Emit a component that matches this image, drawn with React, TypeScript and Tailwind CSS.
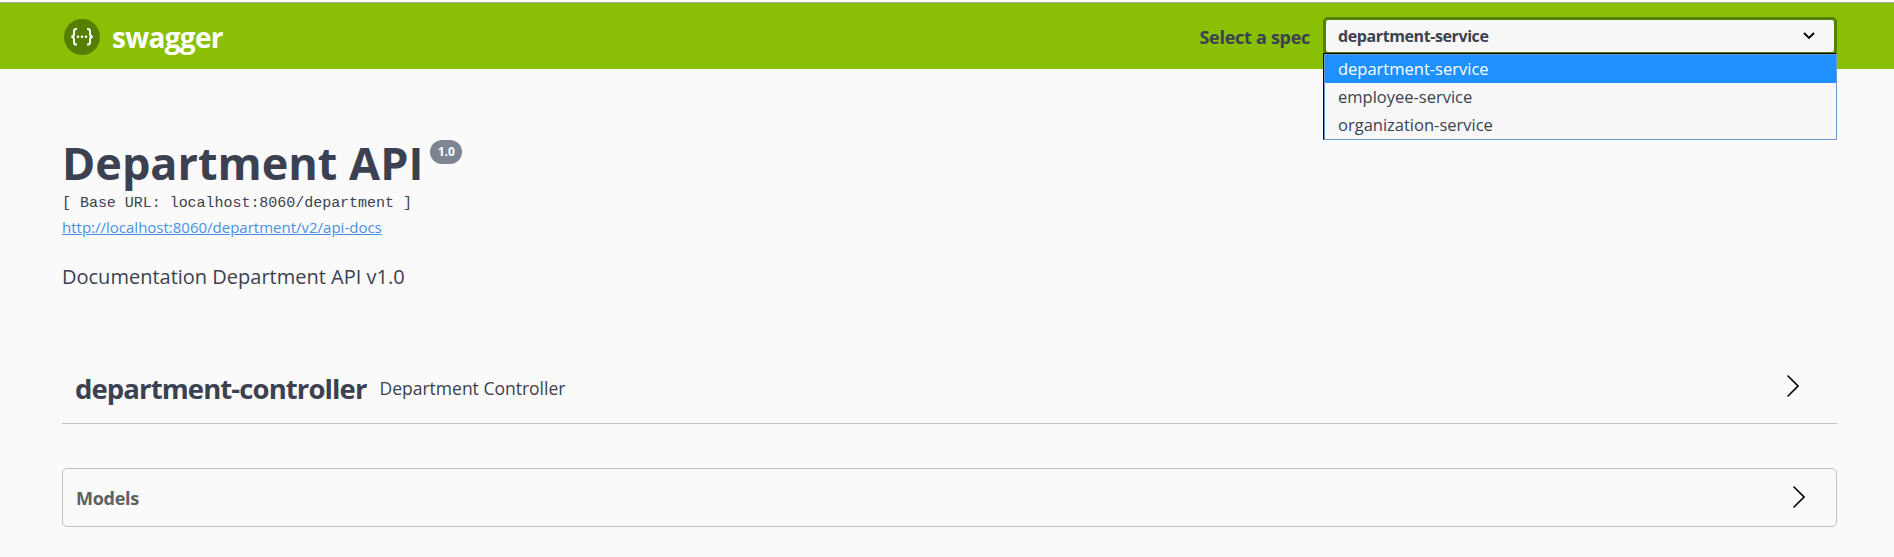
import React from "react";

const services = ["department-service", "employee-service", "organization-service"];

function Arrow({ className }: { className: string }) {
  return (
    <svg width="12" height="22" viewBox="0 0 12 22" fill="none" className={className}>
      <path d="M1 1 L11 11 L1 21" stroke="#000" strokeWidth="1.6" strokeLinecap="round" />
    </svg>
  );
}

function Logo() {
  return (
    <svg width="36" height="36" viewBox="0 0 36 36" fill="none">
      <circle cx="18" cy="18" r="18" fill="#547f00" />
      <g stroke="#fff" strokeWidth="2">
        <path d="M13 10 h-.8 q-2.2 0-2.2 2.4 v2.6 q0 2.8-2.8 2.8 q2.8 0 2.8 2.8 v2.6 q0 2.4 2.2 2.4 h.8" />
        <path d="M23 10 h.8 q2.2 0 2.2 2.4 v2.6 q0 2.8 2.8 2.8 q-2.8 0-2.8 2.8 v2.6 q0 2.4-2.2 2.4 h-.8" />
      </g>
      <g fill="#fff">
        <circle cx="14" cy="17.8" r="1.3" />
        <circle cx="18" cy="17.8" r="1.3" />
        <circle cx="22" cy="17.8" r="1.3" />
      </g>
    </svg>
  );
}

export default function App() {
  return (
    <div className="h-[557px] overflow-hidden bg-[#fafafa] font-['Open_Sans',sans-serif] text-[#3b4151]">
      <div className="h-[3px] border-b border-[#a9a9a9] bg-white" />
      <header className="flex h-[66px] items-start bg-[#89bf04] pl-16 pr-[57px]">
        <div className="flex flex-1 items-center pt-4">
          <Logo />
          <span className="ml-3 text-[28px] leading-9 font-bold tracking-[-0.7px] text-white">swagger</span>
        </div>
        <span className="mr-[13px] pt-[17px] text-[18px] leading-[34px] font-bold tracking-[-0.28px]">Select a spec</span>
        <div className="relative mt-[14px] w-[514px]">
          <div className="flex h-[38px] items-center justify-between rounded-[5px] border-[3px] border-[#547f00] bg-[#f7f7f7] pr-[19px] pl-[12px]">
            <span className="text-[16px] leading-8 font-bold tracking-[-0.4px]">{services[0]}</span>
            <svg width="12" height="8" viewBox="0 0 12 8" fill="none">
              <path d="M1 1 L6 6 L11 1" stroke="#000" strokeWidth="1.9" />
            </svg>
          </div>
          <ul className="absolute top-9 left-0 h-[87px] w-full border border-[#7397cf] border-t-black border-l-black bg-[#f7f7f7]">
            <li className="h-px bg-[#7397cf]" />
            {services.map((s, i) => (
              <li
                key={s}
                className={
                  i === 0
                    ? "h-7 border-l border-[#7397cf] bg-[#1e90ff] pl-[13px] text-[16.5px] leading-7 text-white"
                    : "h-7 border-l border-[#7397cf] pl-[13px] text-[16.5px] leading-7"
                }
              >
                {s}
              </li>
            ))}
          </ul>
        </div>
      </header>
      <main className="pr-[57px] pl-[62px]">
        <div className="flex items-start pt-[63px] pb-px">
          <h1 className="text-[45px] leading-[61px] font-bold">Department API</h1>
          <span className="mt-2 ml-[7px] h-6 w-8 rounded-full bg-[#7d8492] text-center text-[12px] leading-6 font-bold text-white">1.0</span>
        </div>
        <div className="font-['Liberation_Mono',monospace] text-[15px] leading-5 tracking-[-0.03px] whitespace-pre">[ Base URL: localhost:8060/department ]</div>
        <a className="mt-[3px] block text-[15px] leading-5 text-[#4990e2] underline">http://localhost:8060/department/v2/api-docs</a>
        <p className="mt-[26px] text-[20px] leading-7">Documentation Department API v1.0</p>
        <section className="mt-[73px] flex h-[60px] items-start border-b border-[#c3c4c8] pr-[38px] pl-[13px]">
          <h2 className="text-[27.5px] leading-[49px] font-bold tracking-[-0.9px]">department-controller</h2>
          <span className="ml-[13px] flex-1 text-[17.5px] leading-[48px]">Department Controller</span>
          <Arrow className="mt-[11px]" />
        </section>
        <section className="mt-11 flex h-[59px] items-center justify-between rounded-[5px] border border-[#c0c1c5] pr-[31px] pl-[13px]">
          <h3 className="text-[18px] leading-8 font-bold tracking-[-0.28px] text-[#606060]">Models</h3>
          <Arrow className="mb-px" />
        </section>
      </main>
    </div>
  );
}
